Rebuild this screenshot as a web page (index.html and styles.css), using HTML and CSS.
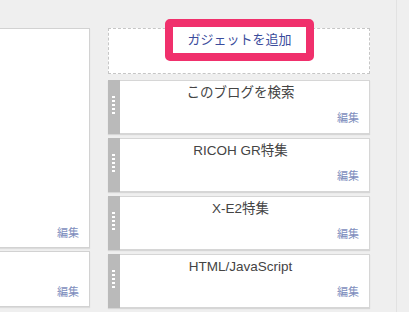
FILE: index.html
```html
<!DOCTYPE html>
<html lang="ja">
<head>
	<meta charset="UTF-8">
	<title>レイアウト</title>
	<link rel="stylesheet" href="styles.css">
</head>
<body>
	<div class="layout">
		<div class="main">
			<div class="panel panel-big">
				<a class="edit" href="#">編集</a>
			</div>
			<div class="panel panel-small">
				<a class="edit" href="#">編集</a>
			</div>
		</div>
		<div class="sidebar">
			<div class="add-box">
				<a class="add-link" href="#">ガジェットを追加</a>
			</div>
			<div class="widget">
				<div class="handle"><span></span><span></span><span></span><span></span><span></span></div>
				<div class="widget-body">
					<div class="widget-title">このブログを検索</div>
					<a class="edit" href="#">編集</a>
				</div>
			</div>
			<div class="widget">
				<div class="handle"><span></span><span></span><span></span><span></span><span></span></div>
				<div class="widget-body">
					<div class="widget-title">RICOH GR特集</div>
					<a class="edit" href="#">編集</a>
				</div>
			</div>
			<div class="widget">
				<div class="handle"><span></span><span></span><span></span><span></span><span></span></div>
				<div class="widget-body">
					<div class="widget-title">X-E2特集</div>
					<a class="edit" href="#">編集</a>
				</div>
			</div>
			<div class="widget">
				<div class="handle"><span></span><span></span><span></span><span></span><span></span></div>
				<div class="widget-body">
					<div class="widget-title">HTML/JavaScript</div>
					<a class="edit" href="#">編集</a>
				</div>
			</div>
			<div class="widget">
				<div class="handle"></div>
				<div class="widget-body"></div>
			</div>
		</div>
		<div class="rest"></div>
	</div>
</body>
</html>
```

FILE: styles.css
```css
html, body, div, a {
	margin: 0;
	padding: 0;
}
a {
	text-decoration: none;
}
body {
	background: #efefef;
	font-family: "Liberation Sans", "Noto Sans CJK JP", sans-serif;
	color: #333;
	height: 312px;
	overflow: hidden;
}
.layout {
	display: flex;
	align-items: flex-start;
	padding-top: 28px;
}

/* 左側のメイン領域 */
.main {
	width: 90px;
	flex: none;
	display: flex;
	flex-direction: column;
	gap: 3px;
}
.panel {
	background: #fff;
	border: 1px solid #d2d2d2;
	border-left: none;
	box-shadow: 0 1px 1px rgba(0, 0, 0, 0.08);
	display: flex;
	justify-content: flex-end;
	align-items: flex-end;
	padding: 0 10px 7px 0;
	box-sizing: border-box;
}
.panel-big {
	height: 220px;
}
.panel-small {
	height: 56px;
}
.edit {
	font-size: 11px;
	line-height: 14px;
	color: #7d8dbd;
}

/* 右側のサイドバー */
.sidebar {
	width: 262px;
	flex: none;
	margin-left: 18px;
	display: flex;
	flex-direction: column;
	gap: 4px;
}
.add-box {
	position: relative;
	height: 46px;
	box-sizing: border-box;
	border: 1px dashed #c6c6c6;
	background: #fff;
	margin-bottom: 2px;
}
.add-link {
	position: absolute;
	left: 56px;
	top: -10px;
	width: 133px;
	height: 26px;
	border: 8px solid #f0306c;
	border-radius: 5px;
	background: #fff;
	color: #3a4c9c;
	font-size: 13px;
	line-height: 26px;
	text-align: center;
}
.widget {
	display: flex;
	height: 54px;
	flex: none;
	box-sizing: border-box;
	border: 1px solid #d6d6d6;
	border-left: none;
	background: #fff;
	box-shadow: 0 1px 1px rgba(0, 0, 0, 0.1);
}
.handle {
	width: 12px;
	flex: none;
	background: #bababa;
	display: flex;
	flex-direction: column;
	gap: 2px;
	padding: 16px 0 0 4px;
	box-sizing: border-box;
	margin-top: -1px;
	margin-bottom: -1px;
}
.handle span {
	display: block;
	width: 3px;
	height: 2px;
	background: #fff;
}
.widget-body {
	flex: 1;
	display: flex;
	flex-direction: column;
	padding: 2px 10px 0 0;
}
.widget-title {
	text-align: center;
	font-size: 13.5px;
	line-height: 20px;
	color: #444;
	height: 28px;
	padding-left: 2px;
}
.widget-body .edit {
	align-self: flex-end;
}

.rest {
	flex: 1;
	margin-left: 26px;
	margin-top: -28px;
	height: 312px;
	border-left: 1px solid #e2e2e2;
}
```
